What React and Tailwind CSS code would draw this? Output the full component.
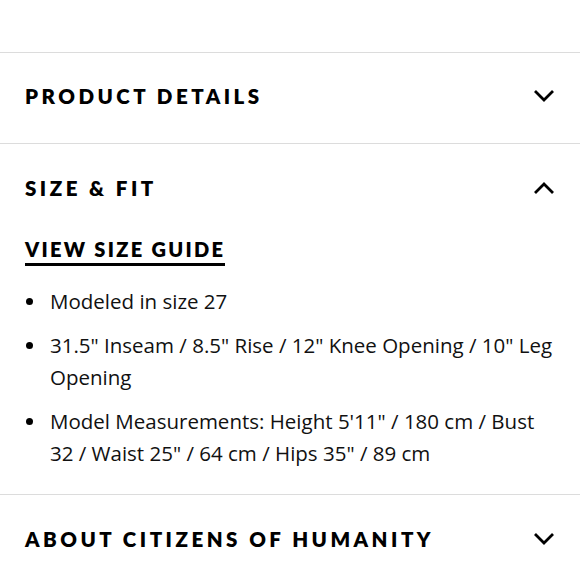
import React from "react";

function Chevron({ up }) {
  return (
    <svg width="24" height="14" viewBox="0 0 24 14" className="shrink-0">
      <path
        d={up ? "M3 12 L12 3 L21 12" : "M3 2 L12 11 L21 2"}
        fill="none"
        stroke="#000"
        strokeWidth="2.8"
      />
    </svg>
  );
}

function Heading({ children, up }) {
  return (
    <div className="flex items-center justify-between">
      <h2 className="text-[20.5px] leading-[24px] font-extrabold tracking-[0.17em] text-black [font-family:Lato,sans-serif]">
        {children}
      </h2>
      <Chevron up={up} />
    </div>
  );
}

const items = [
  "Modeled in size 27",
  '31.5" Inseam / 8.5" Rise / 12" Knee Opening / 10" Leg Opening',
  'Model Measurements: Height 5\'11" / 180 cm / Bust 32 / Waist 25" / 64 cm / Hips 35" / 89 cm',
];

export default function App() {
  return (
    <div className="w-[580px] h-[580px] bg-white overflow-hidden">
      <div className="h-[52px]" />
      <div className="border-t border-[#dcdcdc] pl-[25px] pr-[24px] pb-[4px] h-[91px] flex flex-col justify-center">
        <Heading>PRODUCT DETAILS</Heading>
      </div>
      <div className="border-t border-[#dcdcdc] pl-[25px] pr-[24px] pt-[32px] pb-[24px]">
        <Heading up>SIZE &amp; FIT</Heading>
        <div className="mt-[38px]">
          <span className="inline-block text-[20px] leading-[22px] font-extrabold tracking-[0.115em] text-black border-b-[3px] border-black pb-[3px] [font-family:Lato,sans-serif]">
            VIEW SIZE GUIDE
          </span>
        </div>
        <ul className="mt-[19px] mr-[-2px] flex flex-col gap-[11px] text-[20.5px] leading-[32.5px] text-[#111] [font-family:'Open_Sans',sans-serif]">
          {items.map((t, i) => (
            <li key={i} className="flex">
              <span className="w-[25px] shrink-0 flex items-start pt-[13px] pl-[1px]">
                <span className="block w-[7px] h-[7px] rounded-full bg-black" />
              </span>
              <span>{t}</span>
            </li>
          ))}
        </ul>
      </div>
      <div className="border-t border-[#dcdcdc] pl-[25px] pr-[24px] h-[90px] flex flex-col justify-center">
        <Heading>ABOUT CITIZENS OF HUMANITY</Heading>
      </div>
    </div>
  );
}
